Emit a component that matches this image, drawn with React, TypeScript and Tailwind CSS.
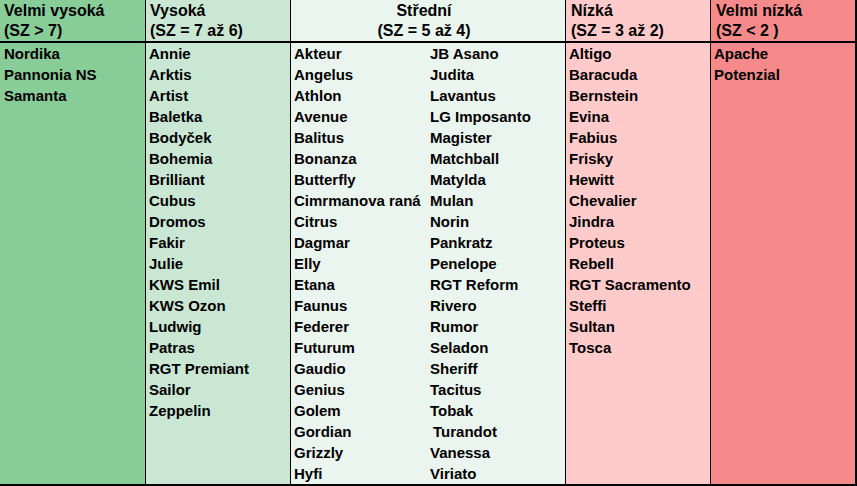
import React from "react";

const col1 = ["Nordika", "Pannonia NS", "Samanta"];
const col2 = ["Annie", "Arktis", "Artist", "Baletka", "Bodyček", "Bohemia", "Brilliant", "Cubus", "Dromos", "Fakir", "Julie", "KWS Emil", "KWS Ozon", "Ludwig", "Patras", "RGT Premiant", "Sailor", "Zeppelin"];
const col3a = ["Akteur", "Angelus", "Athlon", "Avenue", "Balitus", "Bonanza", "Butterfly", "Cimrmanova raná", "Citrus", "Dagmar", "Elly", "Etana", "Faunus", "Federer", "Futurum", "Gaudio", "Genius", "Golem", "Gordian", "Grizzly", "Hyfi"];
const col3b = ["JB Asano", "Judita", "Lavantus", "LG Imposanto", "Magister", "Matchball", "Matylda", "Mulan", "Norin", "Pankratz", "Penelope", "RGT Reform", "Rivero", "Rumor", "Seladon", "Sheriff", "Tacitus", "Tobak", "Turandot", "Vanessa", "Viriato"];
const col4 = ["Altigo", "Baracuda", "Bernstein", "Evina", "Fabius", "Frisky", "Hewitt", "Chevalier", "Jindra", "Proteus", "Rebell", "RGT Sacramento", "Steffi", "Sultan", "Tosca"];
const col5 = ["Apache", "Potenzial"];

function Items({ items }: { items: string[] }) {
  return (
    <div className="flex flex-col">
      {items.map((t) => (
        <div key={t} className={"h-[21px] leading-[21px] whitespace-nowrap" + (t === "Turandot" ? " pl-[3px]" : "")}>
          {t}
        </div>
      ))}
    </div>
  );
}

export default function App() {
  return (
    <div
      className="w-[857px] h-[486px] flex overflow-hidden border-r-2 border-b-2 border-black text-black font-bold text-[15px]"
      style={{ fontFamily: '"Liberation Sans", Arial, sans-serif' }}
    >
      <div className="w-[146px] shrink-0 flex flex-col bg-[#88cc98] border-r border-black">
        <div className="h-[43px] shrink-0 border-b-2 border-black pt-[1px] pl-[4px] leading-[20px] text-[16px]">
          <div>Velmi vysoká</div>
          <div>(SZ &gt; 7)</div>
        </div>
        <div className="pl-[4px]">
          <Items items={col1} />
        </div>
      </div>
      <div className="w-[145px] shrink-0 flex flex-col bg-[#c9e7d3] border-r border-black">
        <div className="h-[43px] shrink-0 border-b-2 border-black pt-[1px] pl-[4px] leading-[20px] text-[16px]">
          <div>Vysoká</div>
          <div>(SZ = 7 až 6)</div>
        </div>
        <div className="pl-[3px]">
          <Items items={col2} />
        </div>
      </div>
      <div className="w-[275px] shrink-0 flex flex-col bg-[#ebf5ef] border-r border-black">
        <div className="h-[43px] shrink-0 border-b-2 border-black pt-[1px] pr-[8px] leading-[20px] text-center text-[16px]">
          <div>Střední</div>
          <div>(SZ = 5 až 4)</div>
        </div>
        <div className="pl-[3px] grid grid-cols-[136px_1fr]">
          <Items items={col3a} />
          <Items items={col3b} />
        </div>
      </div>
      <div className="w-[145px] shrink-0 flex flex-col bg-[#ffcaca] border-r border-black">
        <div className="h-[43px] shrink-0 border-b-2 border-black pt-[1px] pl-[5px] leading-[20px] text-[16px]">
          <div>Nízká</div>
          <div>(SZ = 3 až 2)</div>
        </div>
        <div className="pl-[3px]">
          <Items items={col4} />
        </div>
      </div>
      <div className="w-[144px] shrink-0 flex flex-col bg-[#f68a8a]">
        <div className="h-[43px] shrink-0 border-b-2 border-black pt-[1px] pl-[5px] leading-[20px] text-[16px]">
          <div>Velmi nízká</div>
          <div>(SZ &lt; 2 )</div>
        </div>
        <div className="pl-[3px]">
          <Items items={col5} />
        </div>
      </div>
    </div>
  );
}
